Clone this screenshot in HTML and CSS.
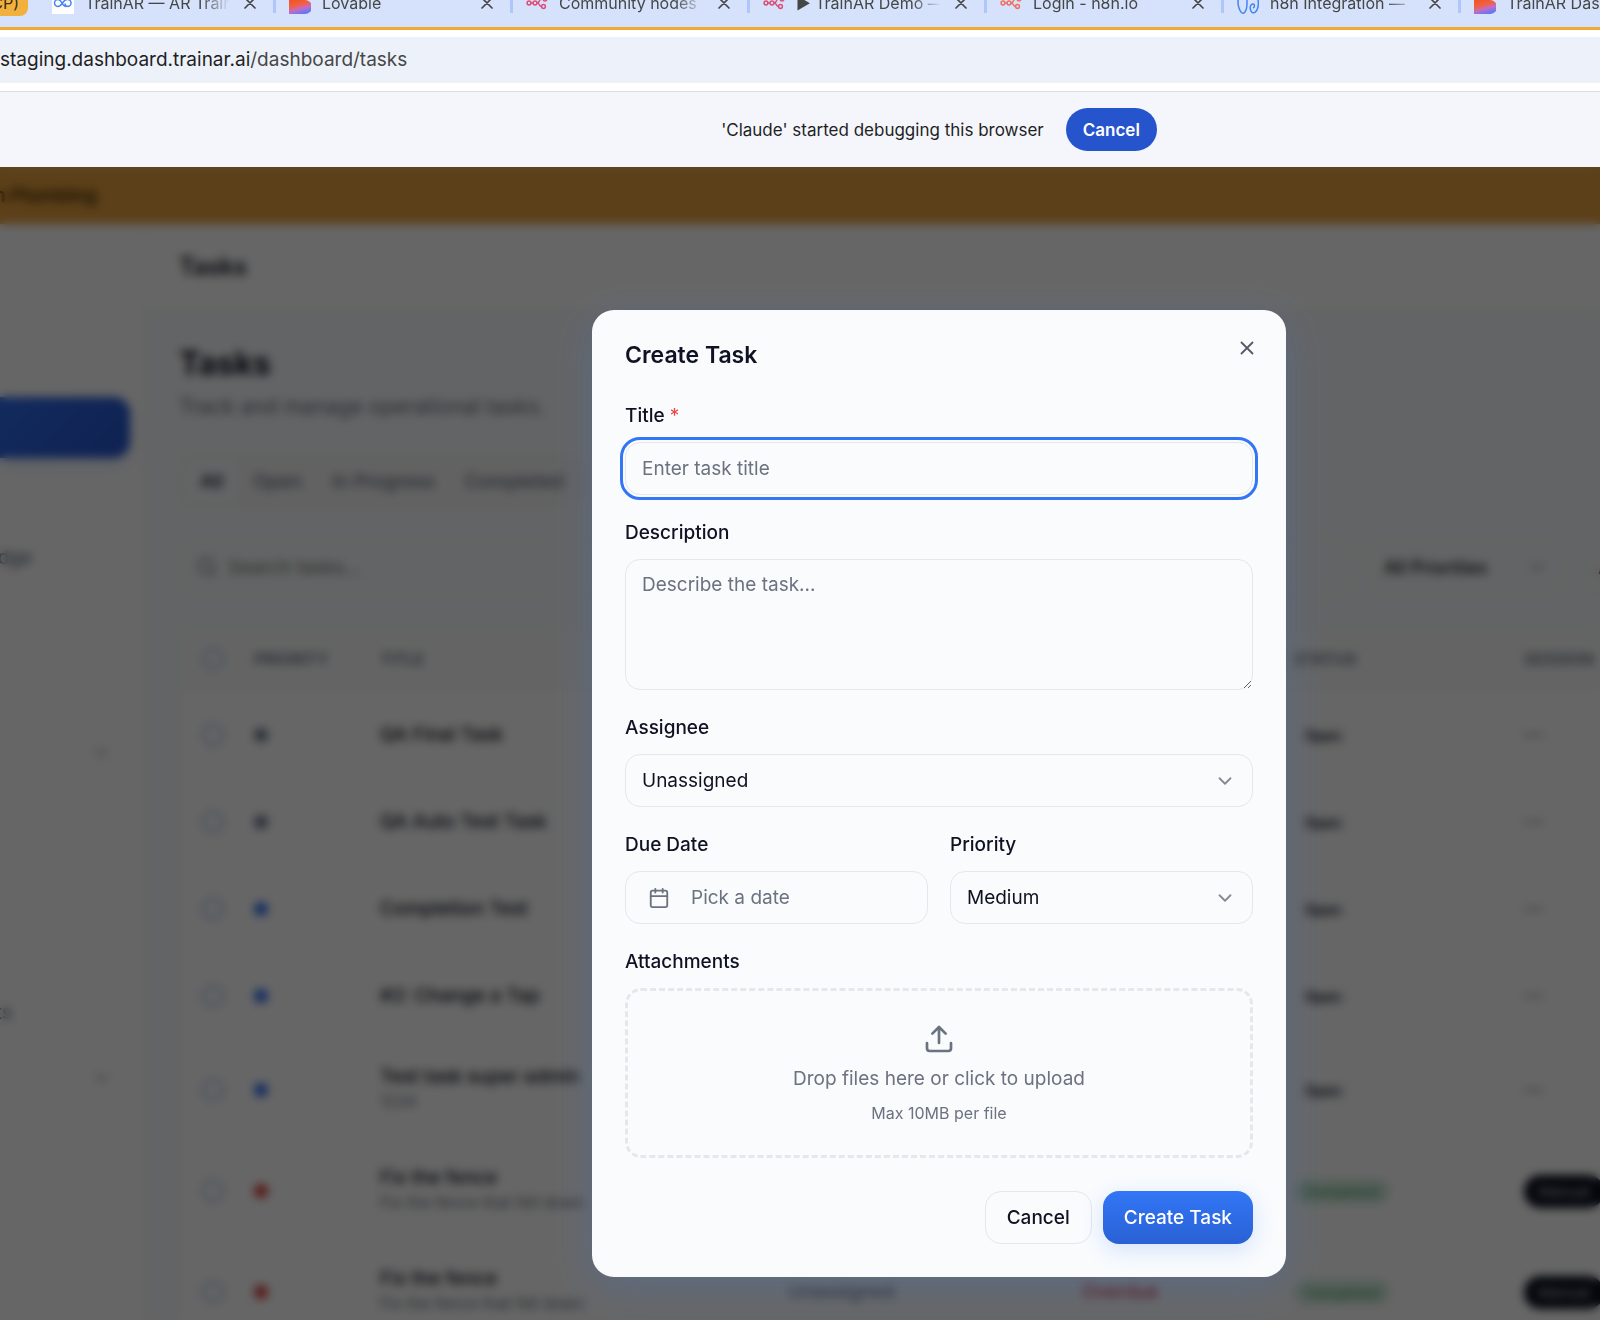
FILE: index.html
```html
<!DOCTYPE html>
<html lang="en">
<head>
  <meta charset="UTF-8" />
  <meta name="viewport" content="width=device-width, initial-scale=1" />
  <title>Tasks - Create Task</title>
  <link rel="stylesheet" href="styles.css">
</head>
<body>
  <!-- Shared icons -->
  <svg class="sprite" aria-hidden="true">
    <defs>
      <linearGradient id="heart" x1="0.3" y1="0" x2="0.6" y2="1">
        <stop offset="0.3" stop-color="#f0542d" />
        <stop offset="0.55" stop-color="#f2603c" />
        <stop offset="0.75" stop-color="#c56bc0" />
        <stop offset="1" stop-color="#5b78ff" />
      </linearGradient>
      <symbol id="i-lovable" viewBox="0 0 22 22">
        <path d="M0 6a6 6 0 0 1 12 0v2h4a7 7 0 0 1 0 14H0z" fill="url(#heart)" />
      </symbol>
      <symbol id="i-n8n" viewBox="0 0 22 22">
        <g fill="none" stroke="currentColor" stroke-width="1.5">
          <circle cx="3" cy="11" r="1.9" />
          <circle cx="9" cy="11" r="1.9" />
          <circle cx="19" cy="7" r="1.9" />
          <circle cx="17.500" cy="14.500" r="1.9" />
          <path d="M5 11h2M11 11c3 0 2-4 4-4h2M11 11c3 0 2 3.500 4.500 3.500" />
        </g>
      </symbol>
      <symbol id="i-infinity" viewBox="0 0 22 22">
        <path d="M14 14.500c-4 0-4-7-8-7a3.500 3.500 0 0 0 0 7c4 0 5-7 9-7a3.500 3.500 0 0 1 1 7c-2 0-3-1.500-3-3" fill="none" stroke="currentColor" stroke-width="1.5" />
      </symbol>
      <symbol id="i-wave" viewBox="0 0 22 22">
        <path d="M5 2C1 4 0 10 2 16s5 7 7 2 0-12 2-16M17 2c4 2 5 8 4 13s-5 8-7 4 0-7 2-7 2 3 0 4" fill="none" stroke="currentColor" stroke-width="1.5" />
      </symbol>
      <symbol id="i-close" viewBox="0 0 24 24">
        <path d="M18 6 6 18M6 6l12 12" fill="none" stroke="currentColor" stroke-width="2" stroke-linecap="round" />
      </symbol>
      <symbol id="i-chevron" viewBox="0 0 24 24">
        <path d="m6 9 6 6 6-6" fill="none" stroke="currentColor" stroke-width="2" stroke-linecap="round" stroke-linejoin="round" />
      </symbol>
    </defs>
  </svg>

  <!-- Browser window -->
  <header class="browser">
    <div class="tab-strip">
      <span class="tab-group">CP)</span>
      <div class="tab">
        <svg class="favicon favicon-white"><use href="#i-infinity" /></svg>
        <span class="tab-title">TrainAR — AR Training</span>
        <button class="tab-close" aria-label="Close tab"><svg><use href="#i-close" /></svg></button>
      </div>
      <div class="tab">
        <svg class="favicon"><use href="#i-lovable" /></svg>
        <span class="tab-title">Lovable</span>
        <button class="tab-close" aria-label="Close tab"><svg><use href="#i-close" /></svg></button>
      </div>
      <div class="tab">
        <svg class="favicon favicon-pink"><use href="#i-n8n" /></svg>
        <span class="tab-title">Community nodes -</span>
        <button class="tab-close" aria-label="Close tab"><svg><use href="#i-close" /></svg></button>
      </div>
      <div class="tab">
        <svg class="favicon favicon-pink"><use href="#i-n8n" /></svg>
        <span class="tab-title">▶ TrainAR Demo —</span>
        <button class="tab-close" aria-label="Close tab"><svg><use href="#i-close" /></svg></button>
      </div>
      <div class="tab">
        <svg class="favicon favicon-coral"><use href="#i-n8n" /></svg>
        <span class="tab-title">Login - n8n.io</span>
        <button class="tab-close" aria-label="Close tab"><svg><use href="#i-close" /></svg></button>
      </div>
      <div class="tab">
        <svg class="favicon favicon-blue"><use href="#i-wave" /></svg>
        <span class="tab-title">n8n Integration —</span>
        <button class="tab-close" aria-label="Close tab"><svg><use href="#i-close" /></svg></button>
      </div>
      <div class="tab">
        <svg class="favicon"><use href="#i-lovable" /></svg>
        <span class="tab-title">TrainAR Dashboard</span>
      </div>
    </div>
    <div class="toolbar">
      <div class="address">staging.dashboard.trainar.ai<span class="address-path">/dashboard/tasks</span></div>
    </div>
    <div class="infobar">
      <span>'Claude' started debugging this browser</span>
      <button class="infobar-btn">Cancel</button>
    </div>
  </header>

  <div class="app">
    <div class="banner"><span class="banner-text">n Plumbing</span></div>

    <div class="shell">
      <aside class="sidebar">
        <ul class="nav">
          <li class="nav-item active"></li>
          <li class="nav-item"></li>
          <li class="nav-item nav-wide">Knowledge</li>
          <li class="nav-item"></li>
          <li class="nav-item"></li>
          <li class="nav-item nav-toggle"><svg class="icon"><use href="#i-chevron" /></svg></li>
          <li class="nav-item nav-line"></li>
          <li class="nav-item"></li>
          <li class="nav-item"></li>
          <li class="nav-item nav-short">Reports</li>
          <li class="nav-item nav-toggle"><svg class="icon"><use href="#i-chevron" /></svg></li>
        </ul>
      </aside>

      <div class="content">
        <div class="topbar">Tasks</div>
        <main class="main">
          <h1>Tasks</h1>
          <p class="subtitle">Track and manage operational tasks.</p>

          <div class="filter-tabs">
            <button class="filter-tab active">All</button>
            <button class="filter-tab">Open</button>
            <button class="filter-tab">In Progress</button>
            <button class="filter-tab">Completed</button>
          </div>

          <div class="filters">
            <label class="search">
              <svg class="icon" viewBox="0 0 24 24" fill="none" stroke="currentColor" stroke-width="2"><circle cx="11" cy="11" r="8" /><path d="m21 21-4-4" /></svg>
              <input type="text" placeholder="Search tasks..." aria-label="Search tasks" />
            </label>
            <div class="filter-select">
              <select aria-label="Priority filter"><option>All Priorities</option></select>
              <svg class="icon"><use href="#i-chevron" /></svg>
            </div>
            <div class="filter-select">
              <select aria-label="Assignee filter"><option>All Assignees</option></select>
            </div>
          </div>

          <div class="table-card">
            <table>
              <colgroup>
                <col class="col-check"><col class="col-priority"><col class="col-title"><col class="col-assignee"><col class="col-due"><col class="col-status"><col>
              </colgroup>
              <thead>
                <tr><th><input type="checkbox" aria-label="Select all" /></th><th>Priority</th><th>Title</th><th>Assignee</th><th>Due date</th><th>Status</th><th>Session</th></tr>
              </thead>
              <tbody>
                <tr><td><input type="checkbox" aria-label="Select task" /></td><td><span class="dot low"></span></td><td class="name">QA Final Task</td><td>Unassigned</td><td>—</td><td><span class="pill">Open</span></td><td>—</td></tr>
                <tr><td><input type="checkbox" aria-label="Select task" /></td><td><span class="dot low"></span></td><td class="name">QA Auto Test Task</td><td>Unassigned</td><td>—</td><td><span class="pill">Open</span></td><td>—</td></tr>
                <tr><td><input type="checkbox" aria-label="Select task" /></td><td><span class="dot medium"></span></td><td class="name">Completion Test</td><td>Unassigned</td><td>—</td><td><span class="pill">Open</span></td><td>—</td></tr>
                <tr><td><input type="checkbox" aria-label="Select task" /></td><td><span class="dot medium"></span></td><td class="name">#2: Change a Tap</td><td>Unassigned</td><td>—</td><td><span class="pill">Open</span></td><td>—</td></tr>
                <tr class="tall"><td><input type="checkbox" aria-label="Select task" /></td><td><span class="dot medium"></span></td><td class="name">Test task super admin<small>1234</small></td><td>Unassigned</td><td>—</td><td><span class="pill">Open</span></td><td>—</td></tr>
                <tr class="tall"><td><input type="checkbox" aria-label="Select task" /></td><td><span class="dot high"></span></td><td class="name">Fix the fence<small>Fix the fence that fell down</small></td><td>Unassigned</td><td class="overdue">Overdue</td><td><span class="pill done">Completed</span></td><td><span class="badge">Manual</span></td></tr>
                <tr class="tall"><td><input type="checkbox" aria-label="Select task" /></td><td><span class="dot high"></span></td><td class="name">Fix the fence<small>Fix the fence that fell down</small></td><td>Unassigned</td><td class="overdue">Overdue</td><td><span class="pill done">Completed</span></td><td><span class="badge">Manual</span></td></tr>
              </tbody>
            </table>
          </div>
        </main>
      </div>
    </div>

    <!-- Create task dialog -->
    <div class="overlay">
      <form class="modal" role="dialog" aria-labelledby="modal-title">
        <button type="button" class="modal-close" aria-label="Close"><svg class="icon"><use href="#i-close" /></svg></button>
        <h2 id="modal-title">Create Task</h2>

        <div class="fields">
          <div class="field">
            <label for="title">Title <span class="required">*</span></label>
            <input type="text" id="title" class="control focused" placeholder="Enter task title" />
          </div>

          <div class="field">
            <label for="description">Description</label>
            <textarea id="description" class="control" placeholder="Describe the task..."></textarea>
          </div>

          <div class="field">
            <label for="assignee">Assignee</label>
            <div class="select-wrap">
              <select id="assignee" class="control"><option>Unassigned</option></select>
              <svg class="icon"><use href="#i-chevron" /></svg>
            </div>
          </div>

          <div class="field-row">
            <div class="field">
              <label for="due">Due Date</label>
              <button type="button" id="due" class="control date-btn">
                <svg class="icon" viewBox="0 0 24 24" fill="none" stroke="currentColor" stroke-width="2" stroke-linecap="round" stroke-linejoin="round"><path d="M8 2v4M16 2v4M3 10h18" /><rect x="3" y="4" width="18" height="18" rx="2" /></svg>
                Pick a date
              </button>
            </div>
            <div class="field">
              <label for="priority">Priority</label>
              <div class="select-wrap">
                <select id="priority" class="control"><option>Medium</option></select>
                <svg class="icon"><use href="#i-chevron" /></svg>
              </div>
            </div>
          </div>

          <div class="field">
            <label for="attachments">Attachments</label>
            <label class="dropzone">
              <input type="file" id="attachments" multiple />
              <svg class="upload" viewBox="0 0 24 24" fill="none" stroke="currentColor" stroke-width="2" stroke-linecap="round" stroke-linejoin="round"><path d="M12 3v12M17 8l-5-5-5 5M21 15v4a2 2 0 0 1-2 2H5a2 2 0 0 1-2-2v-4" /></svg>
              <span class="dropzone-text">Drop files here or click to upload</span>
              <span class="dropzone-hint">Max 10MB per file</span>
            </label>
          </div>
        </div>

        <div class="modal-footer">
          <button type="button" class="btn">Cancel</button>
          <button type="submit" class="btn btn-primary">Create Task</button>
        </div>
      </form>
    </div>
  </div>
</body>
</html>
```

FILE: styles.css
```css
:root {
  --window-shift: 278px;
  --text: #0f1222;
  --muted: #6b7280;
  --border: #e5e7eb;
  --surface: #f9fbfd;
  --blue: #3276f6;
}

* {
  box-sizing: border-box;
}

body {
  margin: 0;
  height: 100vh;
  display: flex;
  flex-direction: column;
  overflow: hidden;
  font-family: Inter, "Liberation Sans", sans-serif;
  font-size: 19px;
  color: var(--text);
}

button, input, select, textarea {
  font: inherit;
  color: inherit;
  margin: 0;
}

button {
  cursor: pointer;
}

.sprite {
  position: absolute;
  width: 0;
  height: 0;
}

.icon {
  width: 22px;
  height: 22px;
  flex: none;
}

/* Browser window */
.browser {
  flex: none;
  background: #fff;
  overflow: hidden;
}

.tab-strip {
  display: flex;
  align-items: center;
  height: 51px;
  margin-top: -21px;
  background: #d6e2fb;
  border-bottom: 3px solid #f0aa33;
  font-size: 16px;
  color: #444746;
}

.tab-group {
  flex: none;
  display: flex;
  justify-content: flex-end;
  align-items: center;
  width: 28px;
  height: 26px;
  margin-right: 11px;
  padding-right: 9px;
  border-radius: 0 8px 8px 0;
  background: #f2b13e;
  color: #3a2c10;
}

.tab {
  flex: none;
  display: flex;
  align-items: center;
  width: 237px;
  height: 20px;
  padding: 0 13px;
  border-right: 3px solid #aec6fa;
}

.favicon {
  flex: none;
  width: 22px;
  height: 22px;
  margin-right: 11px;
}

.favicon-white {
  background: #fff;
  color: #4a86f0;
}

.favicon-pink {
  color: #dd4f78;
}

.favicon-coral {
  color: #f0705f;
}

.favicon-blue {
  color: #4285f4;
}

.tab-title {
  flex: 1;
  overflow: hidden;
  white-space: nowrap;
  -webkit-mask-image: linear-gradient(to right, #000 80%, transparent);
  mask-image: linear-gradient(to right, #000 80%, transparent);
}

.tab-close {
  display: flex;
  margin-left: 10px;
  padding: 0;
  border: 0;
  background: none;
}

.tab-close svg {
  width: 20px;
  height: 20px;
}

.toolbar {
  padding: 7px 0 8px;
  border-bottom: 1px solid #dcdfe0;
}

.address {
  height: 46px;
  line-height: 46px;
  background: #edf1fa;
  color: #1f1f1f;
}

.address-path {
  color: #474747;
}

.infobar {
  display: flex;
  justify-content: center;
  align-items: center;
  gap: 22px;
  height: 75px;
  padding-left: var(--window-shift);
  background: #f4f6fc;
  color: #1f1f1f;
  font-size: 17px;
}

.infobar-btn {
  height: 43px;
  padding: 0 17px;
  border: 0;
  border-radius: 22px;
  background: #2654cc;
  color: #fff;
  font-weight: 600;
}

/* Dashboard */
.app {
  position: relative;
  flex: 1;
  min-height: 0;
  display: flex;
  flex-direction: column;
  overflow: hidden;
}

.banner {
  flex: none;
  display: flex;
  align-items: center;
  height: 57px;
  background: #e6a03f;
  color: #3f2a04;
  font-weight: 600;
}

.banner-text {
  display: flex;
  justify-content: flex-end;
  width: 97px;
  white-space: nowrap;
}

.shell {
  flex: 1;
  min-height: 0;
  display: flex;
}

.sidebar {
  flex: none;
  width: 145px;
  padding: 173px 14px 0 0;
  background: #fff;
  border-right: 1px solid #f0f2f7;
}

.nav {
  display: flex;
  flex-direction: column;
  gap: 4px;
  margin: 0;
  padding: 0;
  list-style: none;
  color: #5d6675;
}

.nav-item {
  display: flex;
  align-items: center;
  justify-content: flex-end;
  height: 61px;
}

.nav-item.active {
  border-radius: 0 16px 16px 0;
  background: linear-gradient(135deg, #2e6aea, #2856ca);
  box-shadow: 0 6px 16px rgba(50, 118, 246, 0.15);
}

.nav-wide {
  width: 32px;
}

.nav-short {
  width: 12px;
}

.nav-toggle {
  padding-right: 18px;
  color: #9aa1ad;
}

.nav-line {
  border-top: 1px solid #eef0f3;
}

.content {
  flex: 1;
  min-width: 0;
  display: flex;
  flex-direction: column;
  background: #f8fafc;
}

.topbar {
  flex: none;
  display: flex;
  align-items: center;
  height: 86px;
  padding-left: 34px;
  background: #fff;
  border-bottom: 1px solid #f3f4f6;
  font-size: 24px;
  font-weight: 600;
}

.main {
  flex: 1;
  min-height: 0;
  padding: 34px 0 0 34px;
  overflow: hidden;
}

h1 {
  margin: 0;
  font-size: 32px;
  font-weight: 700;
  line-height: 40px;
}

.subtitle {
  margin: 8px 0 32px;
  color: var(--muted);
  font-size: 21px;
  line-height: 30px;
}

.filter-tabs {
  display: inline-flex;
  height: 54px;
  padding: 6px;
  border-radius: 16px;
  background: #f5f5f6;
}

.filter-tab {
  padding: 0 15px;
  border: 0;
  border-radius: 11px;
  background: none;
  color: var(--muted);
  font-size: 19px;
  font-weight: 500;
}

.filter-tab.active {
  background: #f9fbfe;
  color: var(--text);
}

.filters {
  display: flex;
  gap: 16px;
  height: 54px;
  margin: 32px 0 33px;
}

.search {
  flex: none;
  display: flex;
  align-items: center;
  gap: 8px;
  width: 1174px;
  padding: 0 16px;
  border: 1px solid #eceef1;
  border-radius: 16px;
  color: var(--muted);
}

.search input {
  border: 0;
  background: none;
}

.filter-select {
  flex: none;
  display: flex;
  align-items: center;
  width: 198px;
  padding: 0 18px 0 14px;
  border: 1px solid #eceef1;
  border-radius: 16px;
}

.filter-select select {
  flex: 1;
  min-width: 0;
  border: 0;
  background: none;
  appearance: none;
  font-size: 18px;
  font-weight: 500;
}

.filter-select .icon {
  color: #9aa1ad;
}

.table-card {
  border-top: 1px solid #eceef1;
  border-left: 1px solid #eceef1;
  border-radius: 16px 0 0 0;
  background: #fff;
  overflow: hidden;
}

table {
  width: 100%;
  table-layout: fixed;
  border-collapse: collapse;
}

.col-check { width: 52px; }
.col-priority { width: 126px; }
.col-title { width: 408px; }
.col-assignee { width: 294px; }
.col-due { width: 212px; }
.col-status { width: 230px; }

th, td {
  padding: 0 0 0 22px;
  text-align: left;
  white-space: nowrap;
  color: var(--muted);
}

th {
  height: 63px;
  background: #fafbfb;
  font-size: 16px;
  font-weight: 600;
  text-transform: uppercase;
}

td {
  height: 87px;
  border-top: 1px solid #fafafa;
}

.tall td {
  height: 101px;
}

td.name {
  color: var(--text);
  font-weight: 500;
}

.name small {
  display: block;
  color: var(--muted);
  font-size: 16px;
  font-weight: 400;
  line-height: 26px;
}

td.overdue {
  color: #dc2626;
}

table input {
  display: block;
  width: 22px;
  height: 22px;
  border: 2px solid #a7b7e0;
  border-radius: 11px;
  appearance: none;
}

.dot {
  display: block;
  width: 14px;
  height: 14px;
  border-radius: 50%;
}

.dot.low { background: #6f7990; }
.dot.medium { background: #2f6cf0; }
.dot.high { background: #dc3a3a; }

.pill {
  padding: 4px 11px;
  border-radius: 14px;
  background: #fcfcfc;
  color: var(--text);
  font-size: 14px;
  font-weight: 600;
}

.pill.done {
  background: #d5eedf;
  color: #5fae7f;
}

.badge {
  padding: 7px 14px;
  border-radius: 18px;
  background: #0c1020;
  color: #b5b8c0;
  font-size: 15px;
}

/* Dialog */
.overlay {
  position: absolute;
  inset: 0;
  display: flex;
  justify-content: center;
  align-items: flex-start;
  padding: 143px 0 0 var(--window-shift);
  background: rgba(0, 0, 0, 0.6);
  backdrop-filter: blur(5px);
}

.modal {
  position: relative;
  width: 694px;
  padding: 33px;
  border-radius: 22px;
  background: var(--surface);
  box-shadow: 0 10px 40px rgba(59, 130, 246, 0.2);
}

.modal h2 {
  margin: 0 0 37px;
  font-size: 23px;
  font-weight: 600;
  line-height: 24px;
}

.modal-close {
  position: absolute;
  top: 27px;
  right: 28px;
  display: flex;
  padding: 0;
  border: 0;
  background: none;
  color: #565a66;
}

.fields, .field {
  display: flex;
  flex-direction: column;
}

.fields {
  gap: 26px;
}

.field {
  gap: 14px;
}

.field-row {
  display: grid;
  grid-template-columns: 1fr 1fr;
  gap: 22px;
}

.field > label:first-child {
  font-weight: 500;
  line-height: 24px;
}

.required {
  color: #ef4444;
  font-weight: 400;
}

.control {
  display: block;
  width: 100%;
  height: 53px;
  padding: 0 16px;
  border: 1px solid var(--border);
  border-radius: 15px;
  background: var(--surface);
  line-height: 27px;
  outline: none;
}

.control::placeholder {
  color: var(--muted);
}

.control.focused {
  outline: 3px solid var(--blue);
  outline-offset: 2px;
}

textarea.control {
  height: 131px;
  padding: 11px 16px;
  resize: vertical;
}

.select-wrap {
  position: relative;
}

.select-wrap select {
  appearance: none;
}

.select-wrap .icon {
  position: absolute;
  top: 16px;
  right: 17px;
  color: #858a94;
  pointer-events: none;
}

.date-btn {
  display: flex;
  align-items: center;
  gap: 21px;
  padding: 0 22px;
  color: var(--muted);
}

.dropzone {
  display: flex;
  flex-direction: column;
  align-items: center;
  gap: 10px;
  padding: 32px;
  border: 3px dashed var(--border);
  border-radius: 16px;
  color: var(--muted);
  cursor: pointer;
}

.dropzone input {
  display: none;
}

.upload {
  width: 32px;
  height: 32px;
}

.dropzone-text {
  line-height: 28px;
}

.dropzone-hint {
  font-size: 16px;
  line-height: 20px;
}

.modal-footer {
  display: flex;
  justify-content: flex-end;
  gap: 11px;
  margin-top: 33px;
}

.btn {
  height: 53px;
  padding: 0 21px;
  border: 1px solid var(--border);
  border-radius: 16px;
  background: var(--surface);
  font-weight: 500;
}

.btn-primary {
  border: 0;
  background: linear-gradient(#3276f6, #2961d4);
  box-shadow: 0 6px 22px rgba(50, 118, 246, 0.18);
  color: #fff;
}
```
